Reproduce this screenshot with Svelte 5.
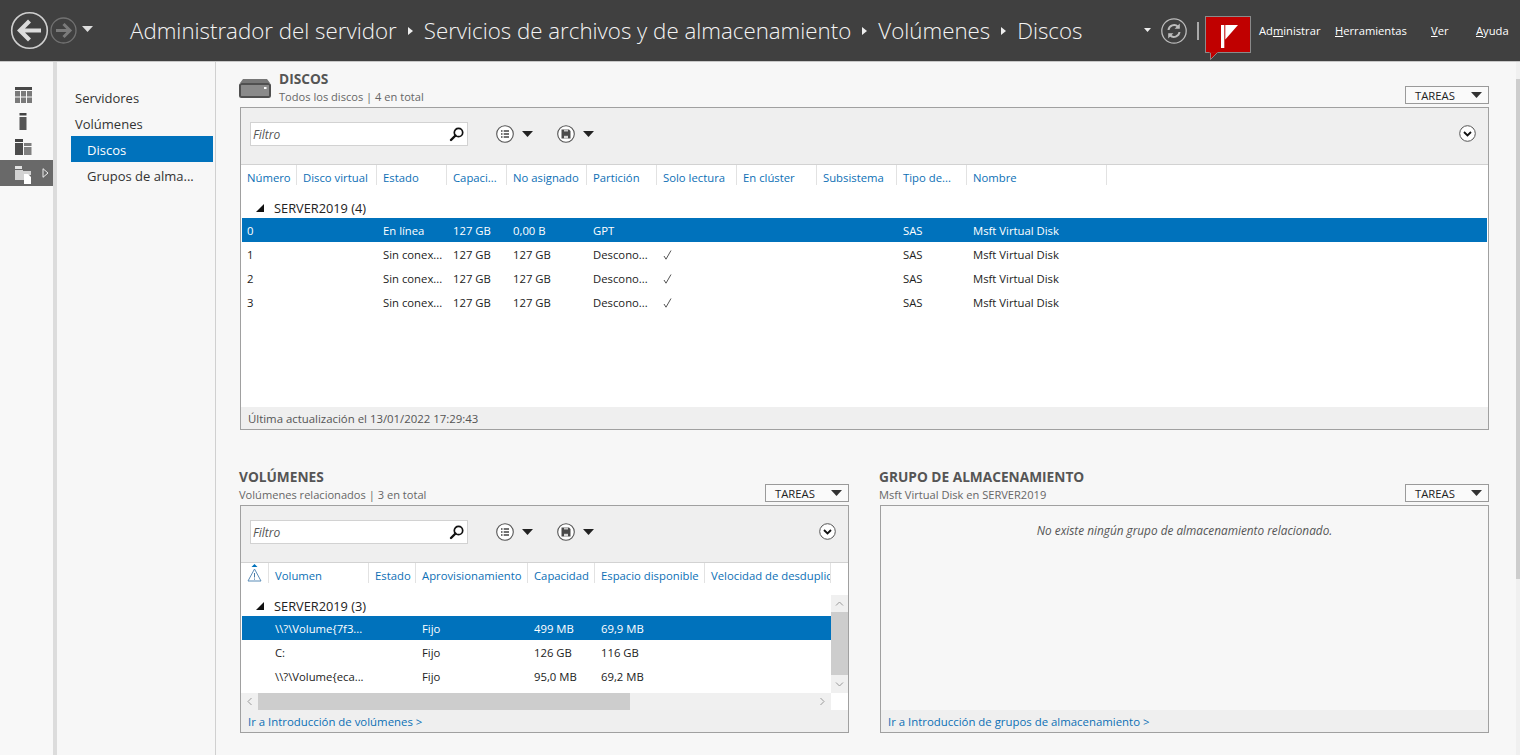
<script>
  const diskCols = [
    ['Número', 56], ['Disco virtual', 80], ['Estado', 70], ['Capaci...', 60], ['No asignado', 80],
    ['Partición', 70], ['Solo lectura', 80], ['En clúster', 80], ['Subsistema', 80], ['Tipo de...', 70], ['Nombre', 140]
  ];
  const diskRows = [
    ['0', '', 'En línea', '127 GB', '0,00 B', 'GPT', '', '', '', 'SAS', 'Msft Virtual Disk'],
    ['1', '', 'Sin conex...', '127 GB', '127 GB', 'Descono...', '✓', '', '', 'SAS', 'Msft Virtual Disk'],
    ['2', '', 'Sin conex...', '127 GB', '127 GB', 'Descono...', '✓', '', '', 'SAS', 'Msft Virtual Disk'],
    ['3', '', 'Sin conex...', '127 GB', '127 GB', 'Descono...', '✓', '', '', 'SAS', 'Msft Virtual Disk']
  ];
  const volCols = [
    ['', 28], ['Volumen', 100], ['Estado', 47], ['Aprovisionamiento', 112], ['Capacidad', 67],
    ['Espacio disponible', 110], ['Velocidad de desduplic', 126]
  ];
  const volRows = [
    ['', '\\\\?\\Volume{7f3...', '', 'Fijo', '499 MB', '69,9 MB', ''],
    ['', 'C:', '', 'Fijo', '126 GB', '116 GB', ''],
    ['', '\\\\?\\Volume{eca...', '', 'Fijo', '95,0 MB', '69,2 MB', '']
  ];
  const tpl = (cols) => cols.map((c) => c[1] + 'px').join(' ');
</script>

{#snippet caret()}
  <svg class="caret" width="11" height="6" viewBox="0 0 11 6"><path d="M0 0h11L5.500 6z" fill="#222" /></svg>
{/snippet}

{#snippet tareas()}
  <button class="tareas"><span>TAREAS</span><svg width="11" height="6" viewBox="0 0 11 6"><path d="M0 0h11L5.500 6z" fill="#333" /></svg></button>
{/snippet}

{#snippet toolbar()}
  <div class="toolbar">
    <div class="filter">
      <span>Filtro</span>
      <svg width="16" height="16" viewBox="0 0 16 16"><circle cx="9.500" cy="6.500" r="4.200" fill="none" stroke="#111" stroke-width="1.700" /><path d="M6.500 9.500L2 14" stroke="#111" stroke-width="2.400" stroke-linecap="round" /></svg>
    </div>
    <div class="tool">
      <svg width="18" height="18" viewBox="0 0 18 18"><circle cx="9" cy="9" r="8.300" fill="#fff" stroke="#555" stroke-width="1.100" /><path d="M5 6h1.500M5 9h1.500M5 12h1.500M7.700 6H13M7.700 9H13M7.700 12H13" stroke="#444" stroke-width="1.500" /></svg>
      {@render caret()}
    </div>
    <div class="tool">
      <svg width="18" height="18" viewBox="0 0 18 18"><circle cx="9" cy="9" r="8.300" fill="#fff" stroke="#555" stroke-width="1.100" /><path d="M4.500 4.500h7.500l1.500 1.500v7.500h-9z" fill="#4a4a4a" /><path d="M7 4.500h4v2H7z" fill="#c4c4c4" /><path d="M7 10.800h4v2.700H7z" fill="#d8d8d8" /></svg>
      {@render caret()}
    </div>
    <svg class="expand" width="17" height="17" viewBox="0 0 17 17"><circle cx="8.500" cy="8.500" r="7.800" fill="#fff" stroke="#555" /><path d="M5 7l3.500 3.500L12 7" fill="none" stroke="#111" stroke-width="1.800" /></svg>
  </div>
{/snippet}

{#snippet cellValue(v)}
  {#if v === '✓'}
    <svg class="check" width="9" height="10" viewBox="0 0 9 10" role="img" aria-label="✓"><path d="M1 6l2 3.200L8 .5" fill="none" stroke="#555" /></svg>
  {:else}{v}{/if}
{/snippet}

<div class="page">
  <header class="top">
    <div class="nav-buttons">
      <svg width="39" height="39" viewBox="0 0 39 39"><circle cx="19.500" cy="19.500" r="17.800" fill="none" stroke="#cfcfcf" stroke-width="1.600" /><path d="M31 19.500H11M19.500 10L10 19.500L19.500 29" fill="none" stroke="#dcdcdc" stroke-width="4.200" /></svg>
      <svg class="fwd" width="27" height="27" viewBox="0 0 27 27"><circle cx="13.500" cy="13.500" r="12.500" fill="none" stroke="#727272" stroke-width="1.300" /><path d="M6 13.500h13M13.500 7l6.500 6.500L13.500 20" fill="none" stroke="#7a7a7a" stroke-width="3" /></svg>
      <svg class="down" width="11" height="6" viewBox="0 0 11 6"><path d="M0 0h11L5.500 6z" fill="#ddd" /></svg>
    </div>
    <div class="crumbs">
      <span>Administrador del servidor</span><i></i>
      <span>Servicios de archivos y de almacenamiento</span><i></i>
      <span>Volúmenes</span><i></i>
      <span>Discos</span>
    </div>
    <div class="actions">
      <svg class="small-down" width="7" height="4" viewBox="0 0 7 4"><path d="M0 0h7L3.500 4z" fill="#eee" /></svg>
      <svg class="refresh" width="26" height="26" viewBox="0 0 26 26"><circle cx="13" cy="13" r="12.200" fill="none" stroke="#bbb" stroke-width="1.300" /><path d="M7.500 12a5.600 5.600 0 0 1 9.500-3.300M18.500 14a5.600 5.600 0 0 1-9.500 3.300" fill="none" stroke="#bdbdbd" stroke-width="2" /><path d="M18.800 5.500v5.200h-5.200zM7.200 20.500v-5.200h5.200z" fill="#bdbdbd" /></svg>
      <span class="bar"></span>
      <div class="flag">
        <svg width="17" height="23" viewBox="0 0 17 23"><path d="M0 0h3.300v23H0z" fill="#fff" /><path d="M4.300 0H17L4.300 14.500z" fill="#fff" /></svg>
        <svg class="tail" width="10" height="9" viewBox="0 0 10 9"><path d="M0 0h9L1.500 7.500V0" fill="#c00000" stroke="#999" stroke-width="0.800" /><path d="M.5 0h8v.8H.5z" fill="#c00000" /></svg>
      </div>
      <nav class="menu">
        <span class="m1">Ad<u>m</u>inistrar</span>
        <span class="m2"><u>H</u>erramientas</span>
        <span class="m3"><u>V</u>er</span>
        <span class="m4"><u>A</u>yuda</span>
      </nav>
    </div>
  </header>

  <div class="body">
    <aside class="rail">
      <div class="rail-item">
        <svg width="17" height="16" viewBox="0 0 17 16"><path d="M0 0h17v3H0z" fill="#484848" /><path d="M0 4h5v5.500H0zM6 4h5v5.500H6zM12 4h5v5.500h-5zM0 10.500h5V16H0zM6 10.500h5V16H6zM12 10.500h5V16h-5z" fill="#7a7a7a" /></svg>
      </div>
      <div class="rail-item">
        <svg width="17" height="17" viewBox="0 0 17 17"><path d="M4.500 0h7v2.500h-7z" fill="#444" /><path d="M4.500 4h7v13h-7z" fill="#555" /></svg>
      </div>
      <div class="rail-item">
        <svg width="17" height="16" viewBox="0 0 17 16"><path d="M0 0h8v3H0z" fill="#444" /><path d="M0 4h8v12H0z" fill="#4c4c4c" /><path d="M9 4h7.500v3H9z" fill="#7d7d7d" /><path d="M9 8h7.500v8H9z" fill="#808080" /></svg>
      </div>
      <div class="rail-item active">
        <svg width="17" height="18" viewBox="0 0 17 18"><path d="M0 0h7v3H0z" fill="#e2e2e2" /><path d="M0 4h8v1h8v4H9v5H0z" fill="#d2d2d2" /><path d="M9 8h4l3 3v7H9z" fill="#fff" /></svg>
        <svg class="arrow" width="7" height="10" viewBox="0 0 7 10"><path d="M1 .7l5 4.300-5 4.300z" fill="none" stroke="#eee" /></svg>
      </div>
    </aside>

    <nav class="side">
      <div class="side-item">Servidores</div>
      <div class="side-item">Volúmenes</div>
      <div class="side-item sub selected">Discos</div>
      <div class="side-item sub">Grupos de alma...</div>
    </nav>

    <main class="main">
      <section class="discos">
        <div class="head">
          <svg class="disk" width="32" height="19" viewBox="0 0 32 19"><path d="M4 0h24l3 4H1z" fill="#777" /><rect x="1" y="5" width="30" height="13" rx="1.500" fill="#8a8a8a" stroke="#505050" stroke-width="2" /><rect x="25" y="8" width="2.500" height="2" fill="#fff" /></svg>
          <div class="titles">
            <h2>DISCOS</h2>
            <p>Todos los discos | 4 en total</p>
          </div>
          {@render tareas()}
        </div>
        <div class="panel big">
          {@render toolbar()}
          <div class="cols" style="grid-template-columns: {tpl(diskCols)}">
            {#each diskCols as c}<div class="col">{c[0]}</div>{/each}
          </div>
          <div class="rows">
            <div class="group"><svg width="8" height="8" viewBox="0 0 8 8"><path d="M8 0v8H0z" fill="#111" /></svg>SERVER2019 (4)</div>
            {#each diskRows as r, i}
              <div class="row" class:sel={i === 0} style="grid-template-columns: {tpl(diskCols)}">
                {#each r as v}<div class="cell">{@render cellValue(v)}</div>{/each}
              </div>
            {/each}
          </div>
          <div class="foot">Última actualización el 13/01/2022 17:29:43</div>
        </div>
      </section>

      <div class="lower">
        <section>
          <div class="head small">
            <div class="titles">
              <h2>VOLÚMENES</h2>
              <p>Volúmenes relacionados | 3 en total</p>
            </div>
            {@render tareas()}
          </div>
          <div class="panel low">
            {@render toolbar()}
            <div class="cols" style="grid-template-columns: {tpl(volCols)}">
              {#each volCols as c, i}
                <div class="col">
                  {#if i === 0}
                    <svg class="warn" width="15" height="18" viewBox="0 0 15 18"><path d="M4.500 3L7.500 0l3 3z" fill="#0072bc" /><path d="M7.500 5L14 17H1z" fill="#fff" stroke="#5b8db8" /><path d="M7.500 9v4.500M7.500 14.500v1.200" stroke="#4a7aa5" /></svg>
                  {:else}{c[0]}{/if}
                </div>
              {/each}
            </div>
            <div class="vol-area">
              <div class="vol-main">
                <div class="group"><svg width="8" height="8" viewBox="0 0 8 8"><path d="M8 0v8H0z" fill="#111" /></svg>SERVER2019 (3)</div>
                {#each volRows as r, i}
                  <div class="row" class:sel={i === 0} style="grid-template-columns: {tpl(volCols)}">
                    {#each r as v}<div class="cell">{v}</div>{/each}
                  </div>
                {/each}
              </div>
              <div class="vscroll">
                <svg width="9" height="5" viewBox="0 0 9 5"><path d="M1 4.500l3.500-3.500 3.500 3.500" fill="none" stroke="#999" /></svg>
                <div class="vthumb"></div>
                <svg width="9" height="5" viewBox="0 0 9 5"><path d="M1 .5l3.500 3.500 3.500-3.500" fill="none" stroke="#999" /></svg>
              </div>
            </div>
            <div class="hscroll">
              <svg width="5" height="9" viewBox="0 0 5 9"><path d="M4.500 1L1 4.500 4.500 8" fill="none" stroke="#999" /></svg>
              <div class="hthumb"></div>
              <svg class="hright" width="5" height="9" viewBox="0 0 5 9"><path d="M.5 1L4 4.500.5 8" fill="none" stroke="#999" /></svg>
            </div>
            <div class="foot link">Ir a Introducción de volúmenes &gt;</div>
          </div>
        </section>

        <section>
          <div class="head small">
            <div class="titles">
              <h2>GRUPO DE ALMACENAMIENTO</h2>
              <p>Msft Virtual Disk en SERVER2019</p>
            </div>
            {@render tareas()}
          </div>
          <div class="panel low empty">
            <div class="message">No existe ningún grupo de almacenamiento relacionado.</div>
            <div class="foot link">Ir a Introducción de grupos de almacenamiento &gt;</div>
          </div>
        </section>
      </div>
    </main>
    <div class="pagebar"><div class="pagethumb"></div></div>
  </div>
</div>

<style>
  :global(body) {
    margin: 0;
    background: #f7f7f7;
    overflow: hidden;
  }
  * { box-sizing: border-box; }
  .page {
    width: 1520px;
    height: 755px;
    display: flex;
    flex-direction: column;
    font-family: "Open Sans", "Noto Sans", sans-serif;
    font-size: 11.300px;
    color: #222;
    overflow: hidden;
  }
  .top {
    height: 62px;
    flex: none;
    background: #404040;
    border-bottom: 1px solid #c8c8c8;
    display: flex;
    align-items: center;
    color: #fff;
  }
  .nav-buttons {
    display: flex;
    align-items: center;
    padding-left: 10px;
    width: 130px;
    flex: none;
  }
  .fwd { margin-left: 1px; }
  .down { margin-left: 5px; margin-top: -4px; }
  .crumbs {
    display: flex;
    align-items: center;
    flex: none;
    width: 1014px;
    font-size: 22.300px;
    font-weight: 300;
    white-space: nowrap;
    color: #f4f4f4;
  }
  .crumbs i {
    width: 0;
    height: 0;
    border-left: 5px solid #eee;
    border-top: 4px solid transparent;
    border-bottom: 4px solid transparent;
    margin: 0 11px 0 11px;
  }
  .actions { display: flex; align-items: center; flex: 1; }
  .small-down { margin-right: 10px; margin-top: -2px; flex: none; }
  .refresh { flex: none; }
  .bar { width: 2px; height: 18px; background: #aaa; margin: 0 6px 0 10px; flex: none; }
  .flag {
    width: 46px;
    height: 37px;
    flex: none;
    align-self: flex-start;
    margin-top: 8px;
    background: #c00000;
    border: 1px solid #8a8a8a;
    position: relative;
    padding: 8px 0 0 15px;
    display: flex;
    align-items: flex-start;
  }
  .tail { position: absolute; left: 3px; top: 35px; }
  .menu { display: flex; font-size: 11.200px; color: #fff; white-space: nowrap; margin-top: -1px; }
  .m1 { margin-left: 8px; width: 76px; }
  .m2 { width: 96px; }
  .m3 { width: 45px; }
  .m4 { width: 40px; }

  .body { flex: 1; display: flex; min-height: 0; }
  .rail {
    width: 57px;
    flex: none;
    background: #f8f8f8;
    border-right: 4px solid #dcdcdc;
    padding-top: 20px;
  }
  .rail-item {
    height: 26px;
    display: flex;
    align-items: center;
    padding-left: 15px;
    position: relative;
  }
  .rail-item.active { background: #696969; padding-top: 4px; }
  .arrow { position: absolute; left: 42px; top: 8px; }
  .side {
    width: 159px;
    flex: none;
    background: #f7f7f7;
    border-right: 1px solid #d0d0d0;
    padding-top: 22px;
    font-size: 13px;
    color: #333;
  }
  .side-item {
    height: 26px;
    line-height: 28px;
    margin: 0 2px 0 14px;
    padding-left: 4px;
    white-space: nowrap;
  }
  .side-item.sub { padding-left: 16px; }
  .side-item.selected { background: #0072bc; color: #fff; }

  .main { flex: 1; min-width: 0; padding: 8px 27px 0 23px; }
  .head {
    display: flex;
    align-items: flex-start;
    height: 37px;
    position: relative;
  }
  .disk { margin-top: 9px; margin-right: 8px; flex: none; }
  .titles { flex: 1; }
  h2 {
    margin: 0;
    font-size: 13.700px;
    line-height: 18px;
    font-weight: 700;
    color: #555;
    white-space: nowrap;
  }
  .titles p {
    margin: 0;
    font-size: 11.100px;
    line-height: 18px;
    color: #666;
  }
  .tareas {
    width: 84px;
    height: 18px;
    margin-top: 16px;
    border: 1px solid #9a9a9a;
    background: #fafafa;
    padding: 0 6px 0 9px;
    font: inherit;
    font-size: 11.300px;
    color: #222;
    display: flex;
    align-items: center;
    justify-content: space-between;
  }
  .panel {
    margin-left: 1px;
    border: 1px solid #a0a0a0;
    background: #fff;
    display: flex;
    flex-direction: column;
  }
  .panel.big { height: 323px; }
  .panel.low { height: 228px; }
  .toolbar {
    height: 57px;
    flex: none;
    background: #efefef;
    border-bottom: 1px solid #d2d2d2;
    display: flex;
    align-items: center;
    padding: 0 12px 5px 9px;
  }
  .filter {
    width: 218px;
    height: 24px;
    background: #fff;
    border: 1px solid #d2d2d2;
    display: flex;
    align-items: center;
    justify-content: space-between;
    padding: 0 2px 0 2px;
    font-style: italic;
    color: #555;
    font-size: 12px;
    margin-right: 28px;
  }
  .filter span { padding-top: 1px; }
  .tool {
    display: flex;
    align-items: center;
    gap: 8px;
    margin-right: 24px;
  }
  .caret { display: block; }
  .expand { margin-left: auto; }
  .cols {
    display: grid;
    height: 24px;
    flex: none;
    overflow: hidden;
    justify-content: start;
  }
  .col {
    border-right: 1px solid #e2e2e2;
    padding-left: 6px;
    line-height: 25px;
    color: #0c6fb5;
    white-space: nowrap;
    overflow: hidden;
    font-size: 11.300px;
    height: 20px;
  }
  .rows { flex: 1; }
  .group {
    height: 29px;
    display: flex;
    align-items: center;
    padding: 8px 0 0 15px;
    gap: 10px;
    font-size: 12.800px;
    color: #222;
  }
  .row {
    display: grid;
    height: 24px;
    align-items: center;
    font-size: 11.300px;
  }
  .row.sel {
    background: linear-gradient(#0072bc, #0072bc) no-repeat 1px 0 / calc(100% - 2px) 100%;
    color: #fff;
  }
  .vol-main .row.sel { background-size: calc(100% - 1px) 100%; }
  .cell { padding-left: 6px; white-space: nowrap; overflow: hidden; }
  .check { display: block; margin-top: 1px; }
  .foot {
    height: 22px;
    flex: none;
    background: #efefef;
    display: flex;
    align-items: center;
    padding-left: 7px;
    color: #555;
    font-size: 11.400px;
    margin-top: auto;
  }
  .foot.link { color: #0c6fb5; }
  .lower {
    display: grid;
    grid-template-columns: 610px 610px;
    column-gap: 30px;
    margin-top: 37px;
  }
  .head.small { height: 38px; padding-top: 1px; }
  .vol-area { display: flex; height: 106px; flex: none; overflow: hidden; }
  .vol-main { width: 590px; flex: none; overflow: hidden; }
  .vscroll {
    width: 17px;
    height: 98px;
    margin-top: 8px;
    flex: none;
    background: #f0f0f0;
    display: flex;
    flex-direction: column;
    align-items: center;
    justify-content: space-between;
    padding: 6px 0;
    position: relative;
  }
  .vthumb {
    position: absolute;
    left: 0;
    right: 0;
    top: 17px;
    height: 63px;
    background: #cdcdcd;
  }
  .hscroll {
    height: 17px;
    width: 590px;
    flex: none;
    background: #f0f0f0;
    display: flex;
    align-items: center;
    padding: 0 6px;
    position: relative;
  }
  .hthumb {
    position: absolute;
    left: 17px;
    width: 372px;
    top: 0;
    bottom: 0;
    background: #cdcdcd;
  }
  .hright { margin-left: auto; }
  .warn { margin: 1px 0 0 0; }
  .empty { background: #f7f7f7; }
  .message {
    flex: 1;
    text-align: center;
    font-style: italic;
    color: #555;
    padding-top: 16px;
    font-size: 11.800px;
  }
  .pagebar {
    width: 4px;
    flex: none;
    background: #f0f0f0;
    padding-top: 17px;
  }
  .pagethumb { height: 500px; background: #cdcdcd; }
</style>
